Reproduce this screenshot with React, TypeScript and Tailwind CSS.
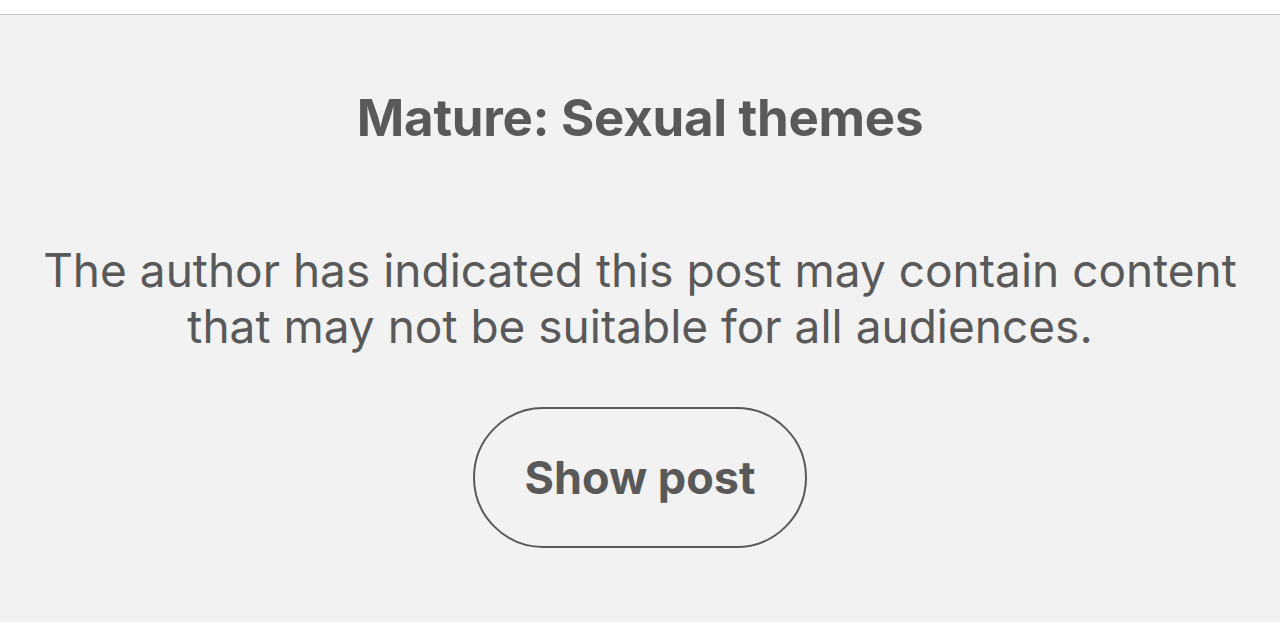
export default function App() {
  return (
    <div className="w-[1280px] h-[640px] bg-white flex flex-col" style={{ fontFamily: 'Inter, "Noto Sans", sans-serif' }}>
      <div className="h-[14px] shrink-0 bg-white" />
      <div className="h-[1px] shrink-0 bg-[#c4c4c4]" />
      <section className="h-[607px] shrink-0 bg-[#f2f2f2] flex flex-col items-center text-[#595959]">
        <h2 className="mt-[75px] text-[51px] leading-[56px] font-bold tracking-[-0.3px] whitespace-nowrap">Mature: Sexual themes</h2>
        <p className="mt-[96px] text-[46px] leading-[56px] text-center whitespace-nowrap">
          The author has indicated this post may contain content
          <br />
          that may not be suitable for all audiences.
        </p>
        <button className="mt-[53px] w-[334px] h-[141px] rounded-full border-2 border-[#595959] text-[45px] font-bold text-[#595959]">
          Show post
        </button>
      </section>
      <div className="flex-1 bg-white" />
    </div>
  );
}
